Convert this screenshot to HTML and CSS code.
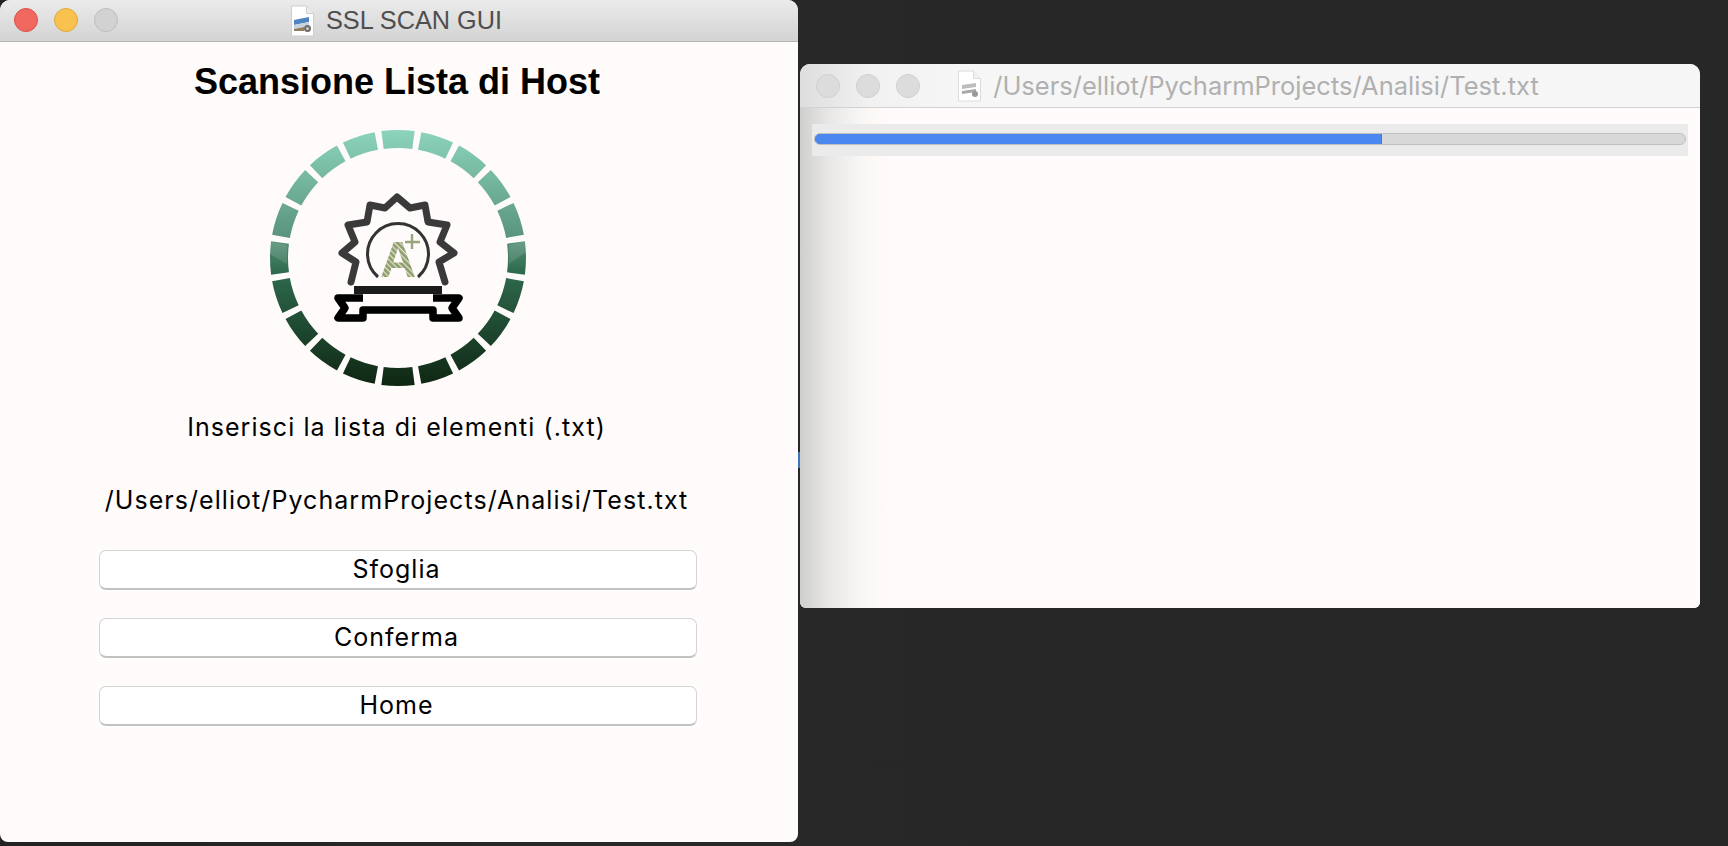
FILE: index.html
```html
<!DOCTYPE html>
<html lang="it">
<head>
    <meta charset="UTF-8">
    <meta name="viewport" content="width=device-width, initial-scale=1.0">
    <title>SSL SCAN GUI</title>
    <link rel="stylesheet" href="styles.css">
</head>
<body>
    <div class="window main-window">
        <div class="titlebar">
            <div class="lights">
                <span class="light red"></span>
                <span class="light yellow"></span>
                <span class="light grey"></span>
            </div>
            <svg class="doc-icon" viewBox="0 0 25 32">
                <path d="M1.5 1h15l7 7.5v22.500h-22z" fill="#fff" stroke="#cfcfcf"/>
                <path d="M16.5 1v7.500h7" fill="#ececec" stroke="#cfcfcf"/>
                <path d="M4 15l15-3v5l-15 3z" fill="#4f84c4"/>
                <path d="M4 20l15-3v4l-15 3z" fill="#c7d3dc"/>
                <path d="M4 24l10-2v4h-10z" fill="#8f7f5e"/>
                <circle cx="17.500" cy="23.500" r="3.500" fill="#6f6c66"/>
                <circle cx="17.500" cy="23.500" r="1.500" fill="#c9c9c4"/>
            </svg>
            <span class="title">SSL SCAN GUI</span>
        </div>
        <div class="main-content">
            <h1>Scansione Lista di Host</h1>
            <svg class="logo" viewBox="266 126 264 264">
                <defs>
                    <linearGradient id="ringFill" gradientUnits="userSpaceOnUse" x1="0" y1="130" x2="0" y2="386">
                        <stop offset="0" stop-color="#8cd4bc"/>
                        <stop offset="0.42" stop-color="#5a947c"/>
                        <stop offset="0.55" stop-color="#2f6b4e"/>
                        <stop offset="1" stop-color="#0e2612"/>
                    </linearGradient>
                    <pattern id="hatch" patternUnits="userSpaceOnUse" width="4" height="4" patternTransform="rotate(45)">
                        <rect width="4" height="4" fill="#8f9c6c"/>
                        <rect width="4" height="1.300" fill="#dfe3cf"/>
                    </pattern>
                </defs>
                <circle class="ring" cx="398" cy="258" r="119" pathLength="360"/>
                <polygon points="509,245 526,241 526,252 509,264" fill="#fff" opacity="0.12"/>
                <polygon points="270,241 287,245 287,264 270,254" fill="#fff" opacity="0.12"/>
                <polyline class="badge" points="351,282 356,262 342,253 355,242 348,225 367,222 370,205 385,208 397,197 410,208 425,205 428,222 447,225 440,242 454,253 439,262 445,282"/>
                <path d="M378 277A30.500 30.500 0 1 1 418 277" fill="none" stroke="#333" stroke-width="3"/>
                <text class="grade" x="398" y="277">A</text>
                <path d="M412 234v15M405 242h15" stroke="#97a67c" stroke-width="2.400"/>
                <rect x="354" y="286" width="88" height="8" fill="#1b1b1b"/>
                <polyline class="ribbon" points="363,298 338,298 345,308 338,318 363,318 363,310 433,310 433,318 459,318 452,308 459,298 433,298"/>
            </svg>
            <p class="label">Inserisci la lista di elementi (.txt)</p>
            <p class="label path">/Users/elliot/PycharmProjects/Analisi/Test.txt</p>
            <div class="btn-wrap"><button>Sfoglia</button></div>
            <div class="btn-wrap"><button>Conferma</button></div>
            <div class="btn-wrap"><button>Home</button></div>
        </div>
    </div>

    <span class="edge-tick"></span>

    <div class="window progress-window">
        <div class="titlebar inactive">
            <div class="lights">
                <span class="light off"></span>
                <span class="light off"></span>
                <span class="light off"></span>
            </div>
            <svg class="doc-icon" viewBox="0 0 25 32">
                <path d="M1.500 1h15l7 7.500v22.500h-22z" fill="#fff" stroke="#dcdcdc"/>
                <path d="M16.500 1v7.500h7" fill="#f2f2f2" stroke="#dcdcdc"/>
                <path d="M5 15l14-2v4l-14 2z" fill="#bdbdbd"/>
                <path d="M5 21l14-2v3l-14 2z" fill="#a8a8a8"/>
                <circle cx="18" cy="24" r="3" fill="#999"/>
            </svg>
            <span class="title">/Users/elliot/PycharmProjects/Analisi/Test.txt</span>
        </div>
        <div class="progress-content">
            <div class="progress-strip">
                <div class="progress-track">
                    <div class="progress-fill" style="width: 65%"></div>
                </div>
            </div>
        </div>
    </div>
</body>
</html>
```

FILE: styles.css
```css
* {
    box-sizing: border-box;
}
html, body {
    height: 100%;
}
body {
    margin: 0;
    overflow: hidden;
    position: relative;
    background: linear-gradient(90deg, #222222, #282828 30%, #272727);
    font-family: Inter, "Liberation Sans", sans-serif;
    color: #000;
}

/* windows sit on a desktop */
.window {
    position: absolute;
    display: flex;
    flex-direction: column;
    background: #fffbfa;
    overflow: hidden;
}
.main-window {
    left: 0;
    top: 0;
    width: 798px;
    height: 842px;
    border-radius: 10px 10px 8px 8px;
}
.progress-window {
    left: 800px;
    top: 64px;
    width: 900px;
    height: 544px;
    border-radius: 10px 10px 6px 6px;
}
.edge-tick {
    position: absolute;
    left: 798px;
    top: 452px;
    width: 2px;
    height: 16px;
    background: #3f74c0;
}

.titlebar {
    position: relative;
    flex: none;
    height: 42px;
    display: flex;
    align-items: center;
    justify-content: center;
    gap: 11px;
    padding-right: 6px;
    background: linear-gradient(#ebebeb, #d3d3d3);
    border-bottom: 1px solid #b4b4b4;
}
.titlebar.inactive {
    height: 44px;
    padding-right: 4px;
    background: linear-gradient(90deg, #dedede, #f1f1f1 70px, #f6f6f6 160px);
    border-bottom-color: #d2d2d2;
}
.lights {
    position: absolute;
    left: 14px;
    top: 8px;
    display: flex;
    gap: 16px;
}
.inactive .lights {
    left: 16px;
    top: 10px;
}
.light {
    width: 24px;
    height: 24px;
    border-radius: 50%;
}
.red {
    background: #f0685e;
    border: 1px solid #dc5049;
}
.yellow {
    background: #f9c24f;
    border: 1px solid #e2a83c;
}
.grey {
    background: #d2d2d2;
    border: 1px solid #bdbdbd;
}
.off {
    background: #dcdcdc;
    border: 1px solid #cfcfcf;
}
.doc-icon {
    width: 25px;
    height: 32px;
    flex: none;
}
.title {
    font-family: "Liberation Sans", Arial, sans-serif;
    font-size: 25.3px;
    color: #4f4f4f;
}
.inactive .title {
    font-family: Inter, sans-serif;
    font-size: 25.5px;
    color: #b0b0b0;
}

/* left window */
.main-content {
    display: flex;
    flex-direction: column;
    align-items: center;
    padding-right: 2px;
}
h1 {
    margin: 20px 2px 0 0;
    font-family: "Liberation Sans", Arial, sans-serif;
    font-size: 36px;
    line-height: 40px;
    font-weight: bold;
}
.logo {
    width: 264px;
    height: 264px;
    margin-top: 24px;
}
.ring {
    fill: none;
    stroke: url(#ringFill);
    stroke-width: 18;
    stroke-dasharray: 15 3;
    stroke-dashoffset: 7.5;
}
.badge {
    fill: none;
    stroke: #3a3a3a;
    stroke-width: 7;
    stroke-linejoin: round;
    stroke-linecap: round;
}
.ribbon {
    fill: none;
    stroke: #000;
    stroke-width: 7.5;
    stroke-linejoin: round;
}
.grade {
    font-family: "Liberation Sans", Arial, sans-serif;
    font-size: 50px;
    font-weight: bold;
    text-anchor: middle;
    fill: url(#hatch);
}
.label {
    margin: 22px 3px 0 0;
    font-size: 25px;
    line-height: 30px;
    letter-spacing: 1.06px;
}
.path {
    margin-top: 43px;
}
.btn-wrap {
    margin-top: 24px;
    padding: 1px 3px 3px;
    background: #fffcfc;
}
.path + .btn-wrap {
    margin-top: 34px;
}
button {
    display: block;
    width: 598px;
    height: 40px;
    padding: 0 3px 1px 0;
    background: #fff;
    border: 1px solid #d4d4d4;
    border-bottom: 2px solid #c2c2c2;
    border-radius: 7px;
    font-family: Inter, "Liberation Sans", sans-serif;
    font-size: 25px;
    letter-spacing: 1px;
    color: #000;
}

/* right window */
.progress-content {
    flex: 1;
    padding: 16px 12px 0 12px;
    background: linear-gradient(90deg, #cfcfcd, #e9e8e6 30px, #f8f6f4 60px, #fffbfa 90px);
}
.progress-strip {
    height: 32px;
    padding: 9px 2px 0;
    background: #ebebeb;
}
.progress-track {
    height: 12px;
    background: #d8d8d8;
    border: 1px solid #bfbfbf;
    border-radius: 6px;
    overflow: hidden;
}
.progress-fill {
    height: 100%;
    background: #4a88f0;
    box-shadow: 0 0 0 1px #3f78dc;
}
```
